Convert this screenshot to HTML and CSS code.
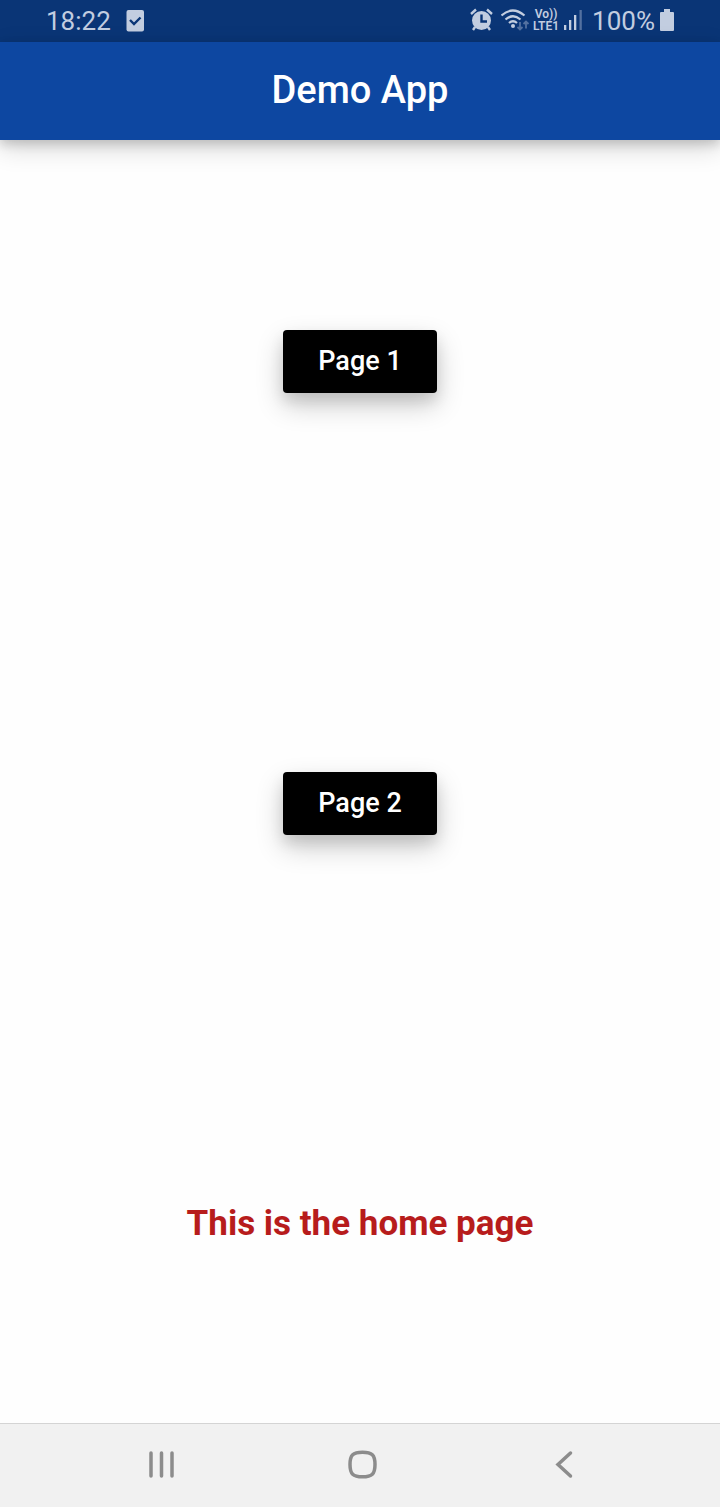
FILE: index.html
```html
<!DOCTYPE html>
<html lang="en">
<head>
<meta charset="utf-8">
<meta name="viewport" content="width=device-width, initial-scale=1">
<title>Demo App</title>
<link rel="stylesheet" href="styles.css">
</head>
<body>
<div class="status">
  <time class="clock">18:22</time>
  <svg class="check" width="18" height="22" viewBox="0 0 18 22" aria-hidden="true">
    <rect x="0.500" width="17.500" height="21.500" rx="2" fill="currentColor"/>
    <path d="M4 10l4 4 6.500-6.500" fill="none" stroke="#0a3576" stroke-width="2.400"/>
  </svg>
  <div class="tray">
    <svg width="24" height="24" viewBox="0 0 24 24" aria-hidden="true">
      <circle cx="11.500" cy="12.500" r="9.500" fill="currentColor"/>
      <path d="M1 6l5-4.500M22 6l-5-4.500M5 19l-2 3M18 19l2 3" fill="none" stroke="currentColor" stroke-width="2.400"/>
      <path d="M11.500 6.500v7h5.500" fill="none" stroke="#0a3576" stroke-width="2.400"/>
    </svg>
    <svg class="wifi" width="30" height="24" viewBox="0 0 30 24" aria-hidden="true">
      <path d="M.5 7.500Q11.500-2.500 23.500 7.500M4.500 11.500q7.500-6.500 15 0M8 15q4-3.500 8 0" fill="none" stroke="currentColor" stroke-width="2.200"/>
      <circle cx="12" cy="18" r="2" fill="currentColor"/>
      <path d="M19 14v7.500m-2.500-2.500l2.500 2.500 2.500-2.500M25 20.500v-7m-2.500 2.500l2.500-2.500 2.500 2.500" fill="none" stroke="currentColor" stroke-width="1.800" opacity=".4"/>
    </svg>
    <span class="lte"><span>Vo))</span><span>LTE1</span></span>
    <svg class="signal" width="18" height="20" viewBox="0 0 18 20" fill="currentColor" aria-hidden="true">
      <rect y="15" width="2.300" height="5"/><rect x="5" y="10" width="2.300" height="10"/><rect x="10" y="5" width="2.300" height="15"/><rect x="15.500" width="2.300" height="20" opacity=".4"/>
    </svg>
    <span class="percent">100%</span>
    <svg class="battery" width="14" height="22" viewBox="0 0 14 22" fill="currentColor" aria-hidden="true">
      <path d="M4 0h6v3h3q1 0 1 1v17q0 1-1 1H1q-1 0-1-1V4q0-1 1-1h3z"/>
    </svg>
  </div>
</div>
<header class="appbar"><h1>Demo App</h1></header>
<main class="content">
  <button class="page-btn" type="button">Page 1</button>
  <button class="page-btn" type="button">Page 2</button>
  <p class="message">This is the home page</p>
</main>
<nav class="navbar" aria-label="System navigation">
  <button type="button" aria-label="Recent apps">
    <svg width="30" height="30" viewBox="0 0 30 30"><path d="M5 3v23M15.500 3v23M26 3v23"/></svg>
  </button>
  <button type="button" aria-label="Home">
    <svg width="30" height="30" viewBox="0 0 30 30"><path d="M15.500 2.200C25 2.200 28 5 28 14.500S25 26.800 15.500 26.800 3 24 3 14.500 6 2.200 15.500 2.200z"/></svg>
  </button>
  <button type="button" aria-label="Back">
    <svg width="30" height="30" viewBox="0 0 30 30"><path d="M22.500 3L10 14.500 22.500 26"/></svg>
  </button>
</nav>
</body>
</html>
```
FILE: styles.css
```css
* {
  box-sizing: border-box;
}

body {
  display: flex;
  flex-direction: column;
  min-height: 100vh;
  margin: 0;
  background: #fefefe;
  font-family: Roboto, "Liberation Sans", sans-serif;
}

.status {
  display: flex;
  align-items: center;
  height: 42px;
  padding: 0 46px;
  background: #0a3576;
  color: #c2cde0;
  font-size: 26px;
  line-height: 42px;
}

.status svg {
  display: block;
  flex: none;
}

.check {
  margin-left: 15px;
}

.tray {
  display: flex;
  align-items: center;
  margin-left: auto;
}

.tray svg,
.lte {
  margin-bottom: 2px;
}

.wifi {
  margin-left: 7px;
}

.lte {
  display: flex;
  flex-direction: column;
  margin-left: 2px;
  font-size: 12px;
  font-weight: 600;
  line-height: 12px;
  text-align: center;
}

.signal {
  margin-left: 5px;
}

.percent {
  margin-left: 10px;
}

.battery {
  margin-left: 5px;
}

.appbar {
  display: flex;
  align-items: center;
  justify-content: center;
  height: 98px;
  padding-bottom: 2px;
  background: #0d47a1;
  color: #fff;
  box-shadow: 0 4px 10px rgba(0, 0, 0, 0.16), 0 8px 24px rgba(0, 0, 0, 0.16);
}

.appbar h1 {
  margin: 0;
  font-size: 38px;
  font-weight: 500;
  line-height: 46px;
}

.content {
  display: flex;
  flex: 1;
  flex-direction: column;
  align-items: center;
  justify-content: space-around;
}

.page-btn {
  min-width: 154px;
  height: 63px;
  margin: 11px 0 10px;
  padding: 0 28px 2px;
  border: 0;
  border-radius: 4px;
  background: #000;
  color: #fff;
  font: 500 27px/32px Roboto, "Liberation Sans", sans-serif;
  box-shadow: 0 8px 14px rgba(0, 0, 0, 0.1), 0 12px 28px rgba(0, 0, 0, 0.2);
}

.message {
  margin: 0;
  color: #b71c1c;
  font-size: 35px;
  font-weight: 700;
  line-height: 41px;
}

.navbar {
  display: flex;
  height: 84px;
  padding: 0 56px 2px 60px;
  border-top: 1px solid #d4d4d4;
  background: #f1f1f1;
}

.navbar button {
  display: flex;
  flex: 1;
  align-items: center;
  justify-content: center;
  padding: 0;
  border: 0;
  background: none;
}

.navbar svg {
  fill: none;
  stroke: #8c8c8c;
  stroke-width: 3.500;
  stroke-linecap: round;
}
```
